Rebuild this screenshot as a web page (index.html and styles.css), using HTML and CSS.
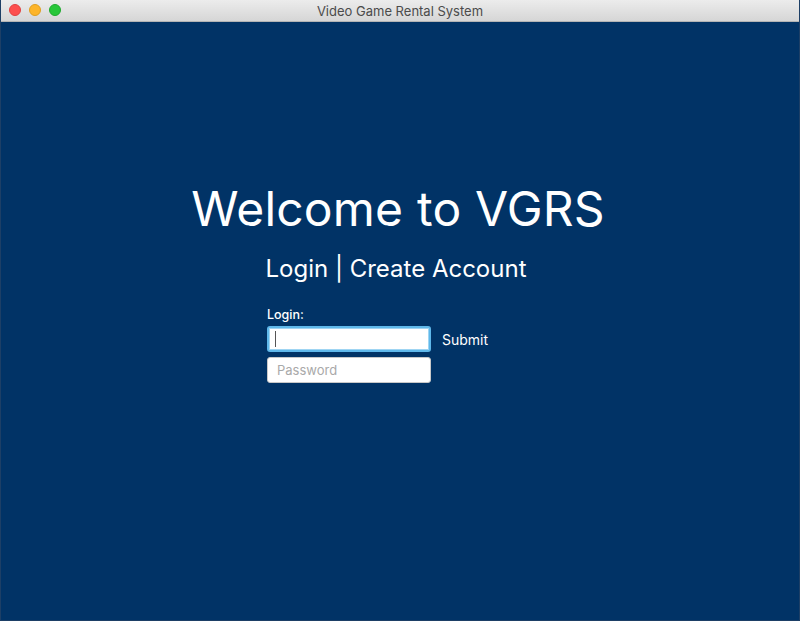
FILE: index.html
```html
<!DOCTYPE html>
<html>
<head>
<meta charset="utf-8">
<link rel="stylesheet" href="styles.css">
</head>
<body>
<div class="window">
  <div class="titlebar">
    <div class="lights">
      <span class="light red"></span>
      <span class="light yellow"></span>
      <span class="light green"></span>
    </div>
    <div class="title">Video Game Rental System</div>
  </div>
  <div class="content">
    <h1 class="heading">Welcome to VGRS</h1>
    <div class="nav"><span>Login</span> | <span>Create Account</span></div>
    <div class="form">
      <div class="label">Login:</div>
      <div class="row">
        <div class="field focused"><span class="caret"></span></div>
        <div class="submit">Submit</div>
      </div>
      <div class="row">
        <div class="field"><span class="placeholder">Password</span></div>
      </div>
    </div>
  </div>
</div>
</body>
</html>
```
FILE: styles.css
```css
* { box-sizing: border-box; }
html, body { margin: 0; padding: 0; }
body {
  width: 800px;
  height: 621px;
  overflow: hidden;
  font-family: Inter, "Noto Sans", sans-serif;
  background: #013366;
}
.window {
  width: 800px;
  height: 621px;
  display: flex;
  flex-direction: column;
  border-left: 1px solid #1d3f66;
  border-right: 1px solid #1d3f66;
  border-bottom: 1px solid #1d3f66;
}
.titlebar {
  height: 22px;
  flex: none;
  background: linear-gradient(#ececec, #d6d6d6);
  border-bottom: 1px solid #b4b4b4;
  position: relative;
  display: flex;
  align-items: center;
  justify-content: center;
}
.lights {
  position: absolute;
  left: 8px;
  top: 4px;
  display: flex;
  gap: 8px;
}
.light {
  width: 12px;
  height: 12px;
  border-radius: 50%;
  display: block;
}
.red { background: #fd4e4d; border: 0.5px solid #e1403f; }
.yellow { background: #fdb52a; border: 0.5px solid #e09f1f; }
.green { background: #28c73a; border: 0.5px solid #1faa2e; }
.title {
  font-size: 13px;
  color: #4b4b4b;
  font-family: Inter, "Noto Sans", sans-serif;
  margin-top: 1px;
}
.content {
  flex: 1;
  display: flex;
  flex-direction: column;
  align-items: center;
  padding-top: 158px;
  color: #fff;
}
.heading {
  margin: 0 0 0 -4px;
  font-weight: 400;
  font-size: 48px;
  line-height: 58px;
  letter-spacing: 0.2px;
}
.nav {
  margin: 16px 8px 0 0;
  font-size: 24px;
  line-height: 30px;
}
.form {
  width: 266px;
  margin-top: 23px;
  display: flex;
  flex-direction: column;
}
.label {
  font-size: 12.5px;
  font-weight: 500;
  line-height: 16px;
  margin-bottom: 3px;
}
.row {
  display: flex;
  align-items: center;
  gap: 11px;
  margin-bottom: 5px;
}
.field {
  width: 164px;
  height: 26px;
  background: #fff;
  border: 1px solid #c8c8c8;
  border-radius: 3px;
  display: flex;
  align-items: center;
  padding-left: 9px;
}
.field.focused {
  border: 2px solid #5fb8ea;
  box-shadow: inset 0 0 0 1px #9fd5f3;
  padding-left: 6px;
}
.caret {
  width: 1px;
  height: 16px;
  background: #555;
}
.placeholder {
  font-size: 13px;
  color: #a9a9a9;
}
.submit {
  font-size: 14px;
  font-weight: 400;
}
```
